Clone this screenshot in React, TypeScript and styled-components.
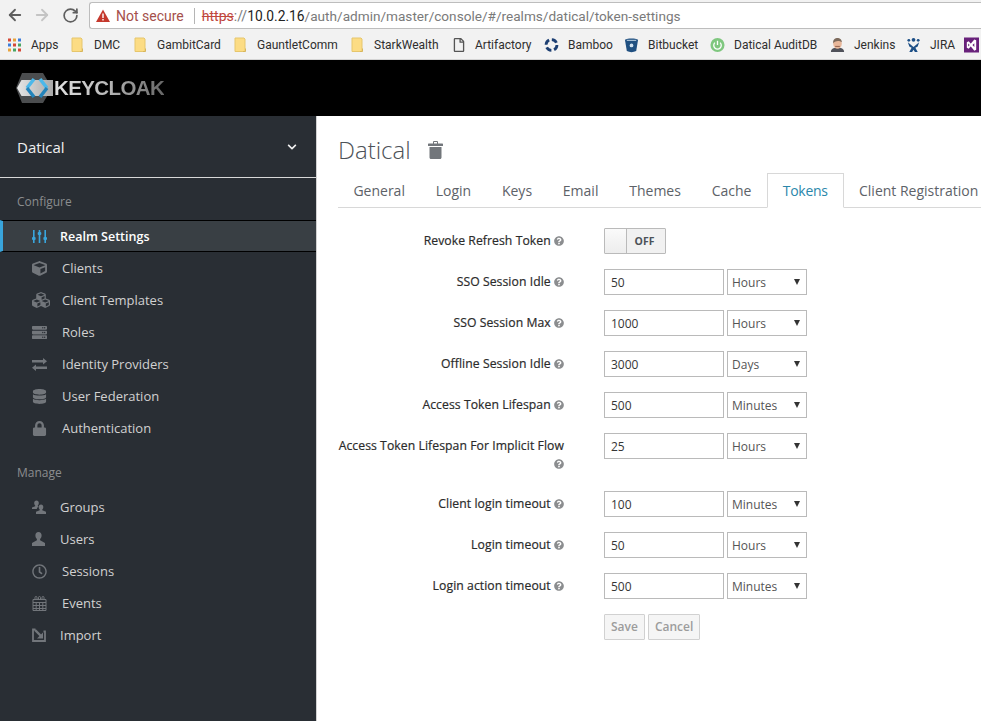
import React from 'react';
import styled, { createGlobalStyle } from 'styled-components';
import {
  FaCube,
  FaCubes,
  FaDatabase,
  FaLock,
  FaQuestionCircle,
  FaRegClock,
  FaRegFile,
  FaServer,
  FaChevronDown,
} from 'react-icons/fa';
import { ArrowLeft, ArrowRight, RotateCw } from 'lucide-react';

const GlobalStyle = createGlobalStyle`
  html, body {
    margin: 0;
    padding: 0;
    height: 100%;
    overflow: hidden;
    background: #fff;
  }
  * {
    box-sizing: border-box;
  }
`;

const Shell = styled.div`
  width: 981px;
  height: 721px;
  display: flex;
  flex-direction: column;
  overflow: hidden;
  font-family: 'Open Sans', sans-serif;
`;

const Toolbar = styled.div`
  height: 30px;
  flex: none;
  display: flex;
  align-items: center;
  background: #f2f2f2;
  padding-left: 6px;
`;

const NavButton = styled.span<{ $dim?: boolean; $gap: number }>`
  display: flex;
  width: 18px;
  margin-right: ${p => p.$gap}px;
  color: ${p => (p.$dim ? '#c4c4c4' : '#5e5e5e')};
`;

const Omnibox = styled.div`
  flex: 1;
  height: 27px;
  margin-top: 1px;
  display: flex;
  align-items: center;
  background: #fff;
  border: 1px solid #bdbdbd;
  border-right: 0;
  border-radius: 3px 0 0 3px;
  padding-left: 6px;
  font-family: Roboto, 'Liberation Sans', sans-serif;
  font-size: 14px;
  white-space: nowrap;
`;

const NotSecure = styled.span`
  color: #a5504b;
  margin-left: 6px;
  padding-right: 10px;
  margin-right: 7px;
  border-right: 1px solid #b5b5b5;
  line-height: 16px;
`;

const Scheme = styled.span`
  color: #c0473d;
  text-decoration: line-through;
`;

const UrlDim = styled.span<{ $path?: boolean }>`
  color: #7a7a7a;
  font-size: ${p => (p.$path ? '13.6px' : '14px')};
`;

const UrlHost = styled.span`
  color: #222;
  font-size: 13.8px;
`;

const BookmarkBar = styled.div`
  height: 30px;
  flex: none;
  display: flex;
  align-items: center;
  background: #f2f2f2;
  border-bottom: 1px solid #d4d4d4;
  padding-left: 7px;
  font-family: Roboto, 'Liberation Sans', sans-serif;
  font-size: 12px;
  color: #2e2e2e;
  white-space: nowrap;
`;

const Bookmark = styled.span<{ $w: number }>`
  flex: none;
  width: ${p => p.$w}px;
  display: flex;
  align-items: center;
  gap: 9px;
`;

const BookmarkIcon = styled.svg`
  flex: none;
  width: 15px;
  height: 16px;
`;

const Masthead = styled.header`
  height: 56px;
  flex: none;
  display: flex;
  align-items: center;
  background: #000;
  padding-left: 16px;
`;

const LogoText = styled.span`
  font-family: 'Liberation Sans', sans-serif;
  font-weight: 700;
  font-size: 20.5px;
  letter-spacing: -0.6px;
  margin-left: -1px;
  background: linear-gradient(90deg, #e0e0e0 0%, #bdbdbd 45%, #666 100%);
  -webkit-background-clip: text;
  background-clip: text;
  color: transparent;
`;

const Body = styled.div`
  flex: 1;
  display: flex;
  min-height: 0;
`;

const Sidebar = styled.aside`
  width: 317px;
  flex: none;
  background: #292e34;
  border-right: 1px solid #d1d1d1;
  color: #d1d1d1;
  font-size: 13px;
`;

const RealmSelect = styled.div`
  height: 62px;
  display: flex;
  align-items: center;
  justify-content: space-between;
  padding: 0 19px 0 17px;
  border-bottom: 1px solid #d8d8d8;
  color: #f0f0f0;
  font-size: 15px;
`;

const SectionTitle = styled.h2<{ $top: number; $bottom: number }>`
  margin: ${p => p.$top}px 0 ${p => p.$bottom}px;
  padding-left: 17px;
  font-size: 12px;
  line-height: 18px;
  font-weight: 400;
  color: #8b8d8f;
`;

const NavRow = styled.div<{ $active?: boolean }>`
  height: 32px;
  display: flex;
  align-items: center;
  padding-left: 32px;
  color: ${p => (p.$active ? '#fff' : '#d1d1d1')};
  ${p =>
    p.$active &&
    `
    background: #393f44;
    border-top: 1px solid #000;
    border-bottom: 1px solid #000;
    border-left: 3px solid #39a5dc;
    padding-left: 29px;
    font-weight: 600;
    font-size: 12.5px;
  `}
`;

const NavIcon = styled.span<{ $active?: boolean; $w: number }>`
  flex: none;
  width: ${p => p.$w}px;
  display: flex;
  align-items: center;
  color: ${p => (p.$active ? '#39a5dc' : '#72767b')};
  font-size: 15px;
`;

const Main = styled.main`
  flex: 1;
  min-width: 0;
  padding: 13px 0 0 21px;
  color: #363636;
  font-size: 12px;
`;

const TitleRow = styled.div`
  height: 40px;
  display: flex;
  align-items: center;
  gap: 17px;
`;

const Title = styled.h1`
  margin: 0;
  font-size: 24px;
  font-weight: 300;
  color: #4d5258;
`;

const TrashButton = styled.span`
  display: flex;
  margin-top: 2px;
  color: #72767b;
`;

const Tabs = styled.nav`
  display: flex;
  height: 35px;
  margin-top: 4px;
  border-bottom: 1px solid #d8d8d8;
  white-space: nowrap;
  font-size: 14px;
`;

const Tab = styled.span<{ $active?: boolean }>`
  flex: none;
  height: 35px;
  display: flex;
  align-items: center;
  padding: 0 15.4px;
  color: ${p => (p.$active ? '#2b87ab' : '#5d6268')};
  ${p =>
    p.$active &&
    `
    padding: 0 15px;
    letter-spacing: -0.3px;
    background: #fff;
    border: 1px solid #d8d8d8;
    border-bottom-color: #fff;
  `}
`;

const Form = styled.form`
  margin-top: 20px;
  display: flex;
  flex-direction: column;
  gap: 15px;
`;

const Row = styled.div`
  display: grid;
  grid-template-columns: 226px 267px;
  column-gap: 40px;
  align-items: start;
`;

const Label = styled.label<{ $tall?: boolean }>`
  display: block;
  text-align: right;
  font-size: 12.2px;
  letter-spacing: 0.07px;
  color: #2b2b2b;
  -webkit-text-stroke: 0.2px #2b2b2b;
  line-height: 18px;
  padding-top: 4px;
  min-height: ${p => (p.$tall ? '43px' : '26px')};
`;

const HelpIcon = styled(FaQuestionCircle)`
  color: #8b8d8f;
  font-size: 10px;
  vertical-align: -1px;
`;

const Controls = styled.div`
  display: flex;
  gap: 3px;
`;

const NumberInput = styled.input`
  width: 120px;
  height: 26px;
  padding: 2px 6px;
  border: 1px solid #bababa;
  font: inherit;
  color: #363636;
  background: #fff;
  outline: 0;
`;

const SelectWrap = styled.span`
  position: relative;
  width: 80px;
  height: 26px;
  display: block;

  &::after {
    content: '';
    position: absolute;
    right: 7px;
    top: 10px;
    border-left: 3.5px solid transparent;
    border-right: 3.5px solid transparent;
    border-top: 6px solid #333;
  }
`;

const UnitSelect = styled.select`
  width: 100%;
  height: 100%;
  appearance: none;
  padding: 0 4px;
  border: 1px solid #bababa;
  border-radius: 0;
  font: inherit;
  color: #555;
  background: #fff;
`;

const Switch = styled.div`
  width: 62px;
  height: 26px;
  display: flex;
  border: 1px solid #bababa;
  border-radius: 1px;
`;

const SwitchHandle = styled.span`
  width: 22px;
  background: linear-gradient(#fafafa, #ededed);
  border-right: 1px solid #bababa;
`;

const SwitchState = styled.span`
  flex: 1;
  display: flex;
  align-items: center;
  justify-content: center;
  padding-right: 3px;
  background: #f1f1f1;
  font-size: 10.5px;
  font-weight: 700;
  color: #4d5258;
`;

const ButtonRow = styled.div`
  display: flex;
  gap: 3px;
  grid-column: 2;
`;

const Button = styled.button`
  height: 26px;
  padding: 0 6px 2px;
  border: 1px solid #d1d1d1;
  border-radius: 1px;
  background: #f5f5f5;
  color: #9c9c9c;
  font: inherit;
  font-weight: 600;
`;

const TrashIcon = () => (
  <svg width="15" height="18" viewBox="0 0 15 18" fill="currentColor">
    <path d="M5 3V1.200C5 .5 5.500 0 6.200 0h2.600C9.500 0 10 .5 10 1.200V3H9V1H6v2z" />
    <rect x="0" y="2.500" width="15" height="2.500" rx="0.600" />
    <path d="M1.500 6h12v10.500c0 .9-.6 1.500-1.500 1.500H3c-.9 0-1.500-.6-1.500-1.500z" />
  </svg>
);

const SlidersIcon = () => (
  <svg width="15" height="15" viewBox="0 0 15 15" fill="currentColor">
    <rect x="1" y="1" width="1.6" height="13" />
    <rect x="6.700" y="1" width="1.6" height="13" />
    <rect x="12.400" y="1" width="1.6" height="13" />
    <rect x="0" y="8" width="3.6" height="3" rx="1" />
    <rect x="5.700" y="3" width="3.6" height="3" rx="1" />
    <rect x="11.400" y="8" width="3.6" height="3" rx="1" />
  </svg>
);

const ExchangeIcon = () => (
  <svg width="15" height="13" viewBox="0 0 15 13" fill="currentColor">
    <path d="M0 2h11V0l4 3.200-4 3.200V4.500H0z" />
    <path d="M15 8.500H4V6.600L0 9.800 4 13v-2h11z" />
  </svg>
);

const GroupsIcon = () => (
  <svg width="14" height="14" viewBox="0 0 14 14" fill="currentColor">
    <path d="M4.500 0.500c1.500 0 2.300 1.100 2.300 2.500 0 1-.4 1.900-1 2.400v.8l.9.4c-1 .5-1.700 1.300-1.900 2.400H0V7.600l3.200-1.400v-.8c-.6-.5-1-1.400-1-2.400C2.200 1.600 3 .5 4.500.5z" />
    <path d="M9 4.500c1.500 0 2.300 1.100 2.300 2.500 0 1-.4 1.900-1 2.400v.8L14 11.800V14H4v-2.200l3.700-1.600v-.8c-.6-.5-1-1.400-1-2.400C6.700 5.600 7.500 4.500 9 4.500z" />
  </svg>
);

const UserIcon = () => (
  <svg width="13" height="14" viewBox="0 0 13 14" fill="currentColor">
    <path d="M6.500 0C8.500 0 9.600 1.500 9.600 3.500c0 1.500-.6 2.800-1.500 3.500v1.300L13 11v3H0v-3l4.900-2.700V7C4 6.300 3.400 5 3.400 3.500 3.400 1.500 4.500 0 6.500 0z" />
  </svg>
);

const CalendarIcon = () => (
  <svg width="15" height="15" viewBox="0 0 15 15" fill="none" stroke="currentColor" strokeWidth="1">
    <path d="M1 3.500h13v11H1zM1 6.500h13M1 9.500h13M1 12.500h13M4.200 6.500v8M7.500 6.500v8M10.800 6.500v8" />
    <path d="M3 3.500V1.500a1 1 0 0 1 2 0v2M6.500 3.500V1.500a1 1 0 0 1 2 0v2M10 3.500V1.500a1 1 0 0 1 2 0v2" />
  </svg>
);

const ImportIcon = () => (
  <svg width="14" height="14" viewBox="0 0 14 14" fill="none" stroke="currentColor">
    <path d="M3.500 1.500H1v11.500h12V3.500H11.500" strokeWidth="1.800" />
    <path d="M3 2l6.500 6.500" strokeWidth="2.400" />
    <path d="M11 10.500V4.500L5 10.500z" fill="currentColor" stroke="none" />
  </svg>
);

const FolderIcon = () => (
  <BookmarkIcon viewBox="0 0 15 16">
    <path d="M2 1h9l1 1v12.500H2z" fill="#fcdc84" stroke="#e6c66c" />
    <path d="M10 14.500h2.500V11.500" fill="none" stroke="#d8b65c" />
  </BookmarkIcon>
);

const BambooIcon = () => (
  <BookmarkIcon viewBox="0 0 16 16">
    <circle cx="8" cy="8" r="5.800" fill="none" stroke="#1d3f72" strokeWidth="3" strokeDasharray="6 3" />
  </BookmarkIcon>
);

const BitbucketIcon = () => (
  <BookmarkIcon viewBox="0 0 16 16">
    <path d="M1 2.500C4 0.500 12 0.500 15 2.500L13 14.500C10 16 6 16 3 14.500z" fill="#205081" />
    <circle cx="8" cy="8.500" r="2" fill="#cfe0ee" />
    <path d="M3 3h10" stroke="#cfe0ee" strokeWidth="1" />
  </BookmarkIcon>
);

const AuditIcon = () => (
  <BookmarkIcon viewBox="0 0 16 16">
    <circle cx="8" cy="8" r="7.500" fill="#7fc77f" />
    <path d="M5.200 5.500a4 4 0 1 0 5.600 0" fill="none" stroke="#fff" strokeWidth="1.400" />
    <path d="M8 3.500v4.500" stroke="#fff" strokeWidth="1.400" />
  </BookmarkIcon>
);

const JenkinsIcon = () => (
  <BookmarkIcon viewBox="0 0 16 16">
    <path d="M1 15.500c0-3 2-4.500 7-4.500s7 1.500 7 4.500z" fill="#50525a" />
    <ellipse cx="8" cy="6.500" rx="4.600" ry="5.600" fill="#e8b79a" />
    <path d="M3.400 6C3 1.500 6 0.500 8 0.500s4.600 1 4.600 4.500C10 3 6 3 3.400 6z" fill="#7c6a5c" />
    <path d="M5.500 9.500h5" stroke="#8e5b46" strokeWidth="1" />
  </BookmarkIcon>
);

const JiraIcon = () => (
  <BookmarkIcon viewBox="0 0 16 16">
    <circle cx="8" cy="2.500" r="2" fill="#1d4f86" />
    <circle cx="3" cy="3" r="1.500" fill="#1d4f86" />
    <circle cx="13" cy="3" r="1.500" fill="#1d4f86" />
    <path d="M2 5l6 5 6-5-1.500 4.500L10 11l2.500 4.500h-3L8 13l-1.500 2.500h-3L6 11 3.500 9.500z" fill="#1d4f86" />
  </BookmarkIcon>
);

const VsIcon = () => (
  <BookmarkIcon viewBox="0 0 16 16">
    <rect width="16" height="16" fill="#68217a" />
    <path d="M3 5l2-1 3.500 4L5 12l-2-1zM13 3v10l-2 1-5-6 5-6z" fill="#fff" />
    <path d="M4.500 6.500v3L6 8zM11 6l-2 2 2 2z" fill="#68217a" />
  </BookmarkIcon>
);

const AppsIcon = () => {
  const colors = ['#d64937', '#e8a33d', '#3b7ddd', '#3b7ddd', '#d64937', '#4aa564', '#e8a33d', '#4aa564', '#d64937'];
  return (
    <BookmarkIcon viewBox="0 0 15 15">
      {colors.map((c, i) => (
        <rect key={i} x={1 + (i % 3) * 5} y={1 + Math.floor(i / 3) * 5} width="3" height="3" fill={c} />
      ))}
    </BookmarkIcon>
  );
};

const LogoMark = () => (
  <svg width="39" height="30" viewBox="0 0 39 30">
    <defs>
      <linearGradient id="logoBand" x1="0" x2="1" y1="0" y2="0">
        <stop offset="0" stopColor="#e6e6e6" />
        <stop offset="1" stopColor="#a9a9a9" />
      </linearGradient>
    </defs>
    <path d="M6 0H27L36 15 27 30H6L0 15z" fill="#4b4d4f" />
    <path d="M1 15L5.500 7H37V23H5.500z" fill="url(#logoBand)" />
    <path d="M18 6l-7 9" fill="none" stroke="#4cb8ea" strokeWidth="3.500" />
    <path d="M11 15l7 9" fill="none" stroke="#2384bb" strokeWidth="3.500" />
    <path d="M24 6l7 9" fill="none" stroke="#4cb8ea" strokeWidth="3.500" />
    <path d="M31 15l-7 9" fill="none" stroke="#2384bb" strokeWidth="3.500" />
  </svg>
);

const bookmarks: { label: string; w: number; icon: React.ReactNode }[] = [
  { label: 'DMC', w: 63, icon: <FolderIcon /> },
  { label: 'GambitCard', w: 100, icon: <FolderIcon /> },
  { label: 'GauntletComm', w: 117, icon: <FolderIcon /> },
  { label: 'StarkWealth', w: 102, icon: <FolderIcon /> },
  { label: 'Artifactory', w: 92, icon: <FaRegFile size={14} color="#555" /> },
  { label: 'Bamboo', w: 80, icon: <BambooIcon /> },
  { label: 'Bitbucket', w: 86, icon: <BitbucketIcon /> },
  { label: 'Datical AuditDB', w: 120, icon: <AuditIcon /> },
  { label: 'Jenkins', w: 76, icon: <JenkinsIcon /> },
  { label: 'JIRA', w: 58, icon: <JiraIcon /> },
];

const configureItems: { label: string; w: number; icon: React.ReactNode }[] = [
  { label: 'Clients', w: 30, icon: <FaCube /> },
  { label: 'Client Templates', w: 30, icon: <FaCubes size={18} /> },
  { label: 'Roles', w: 30, icon: <FaServer /> },
  { label: 'Identity Providers', w: 30, icon: <ExchangeIcon /> },
  { label: 'User Federation', w: 30, icon: <FaDatabase /> },
  { label: 'Authentication', w: 30, icon: <FaLock /> },
];

const manageItems: { label: string; w: number; icon: React.ReactNode }[] = [
  { label: 'Groups', w: 28, icon: <GroupsIcon /> },
  { label: 'Users', w: 28, icon: <UserIcon /> },
  { label: 'Sessions', w: 30, icon: <FaRegClock /> },
  { label: 'Events', w: 30, icon: <CalendarIcon /> },
  { label: 'Import', w: 28, icon: <ImportIcon /> },
];

const tabs = ['General', 'Login', 'Keys', 'Email', 'Themes', 'Cache', 'Tokens', 'Client Registration'];

const timeouts: { label: string; value: string; unit: string; tall?: boolean }[] = [
  { label: 'SSO Session Idle', value: '50', unit: 'Hours' },
  { label: 'SSO Session Max', value: '1000', unit: 'Hours' },
  { label: 'Offline Session Idle', value: '3000', unit: 'Days' },
  { label: 'Access Token Lifespan', value: '500', unit: 'Minutes' },
  { label: 'Access Token Lifespan For Implicit Flow', value: '25', unit: 'Hours', tall: true },
  { label: 'Client login timeout', value: '100', unit: 'Minutes' },
  { label: 'Login timeout', value: '50', unit: 'Hours' },
  { label: 'Login action timeout', value: '500', unit: 'Minutes' },
];

const App: React.FC = () => (
  <Shell>
    <GlobalStyle />
    <Toolbar>
      <NavButton $gap={9}><ArrowLeft size={18} strokeWidth={2.4} /></NavButton>
      <NavButton $dim $gap={11}><ArrowRight size={18} strokeWidth={2.4} /></NavButton>
      <NavButton $gap={9}><RotateCw size={17} strokeWidth={2.4} /></NavButton>
      <Omnibox>
        <svg width="14" height="13" viewBox="0 0 14 13">
          <path d="M7 0.500L14 13H0z" fill="#c5392d" />
          <rect x="6.300" y="4.500" width="1.400" height="4.500" fill="#fff" />
          <rect x="6.300" y="10" width="1.400" height="1.500" fill="#fff" />
        </svg>
        <NotSecure>Not secure</NotSecure>
        <Scheme>https</Scheme>
        <UrlDim>://</UrlDim>
        <UrlHost>10.0.2.16</UrlHost>
        <UrlDim $path>/auth/admin/master/console/#/realms/datical/token-settings</UrlDim>
      </Omnibox>
    </Toolbar>
    <BookmarkBar>
      <Bookmark $w={63}>
        <AppsIcon />
        Apps
      </Bookmark>
      {bookmarks.map(b => (
        <Bookmark key={b.label} $w={b.w}>
          {b.icon}
          {b.label}
        </Bookmark>
      ))}
      <VsIcon />
    </BookmarkBar>
    <Masthead>
      <LogoMark />
      <LogoText>KEYCLOAK</LogoText>
    </Masthead>
    <Body>
      <Sidebar>
        <RealmSelect>
          Datical
          <FaChevronDown size={10} />
        </RealmSelect>
        <SectionTitle $top={15} $bottom={9}>Configure</SectionTitle>
        <NavRow $active>
          <NavIcon $active $w={28}><SlidersIcon /></NavIcon>
          Realm Settings
        </NavRow>
        {configureItems.map(item => (
          <NavRow key={item.label}>
            <NavIcon $w={item.w}>{item.icon}</NavIcon>
            {item.label}
          </NavRow>
        ))}
        <SectionTitle $top={20} $bottom={9}>Manage</SectionTitle>
        {manageItems.map(item => (
          <NavRow key={item.label}>
            <NavIcon $w={item.w}>{item.icon}</NavIcon>
            {item.label}
          </NavRow>
        ))}
      </Sidebar>
      <Main>
        <TitleRow>
          <Title>Datical</Title>
          <TrashButton><TrashIcon /></TrashButton>
        </TitleRow>
        <Tabs>
          {tabs.map(t => (
            <Tab key={t} $active={t === 'Tokens'}>{t}</Tab>
          ))}
        </Tabs>
        <Form>
          <Row>
            <Label>Revoke Refresh Token <HelpIcon /></Label>
            <Switch>
              <SwitchHandle />
              <SwitchState>OFF</SwitchState>
            </Switch>
          </Row>
          {timeouts.map(t => (
            <Row key={t.label}>
              <Label $tall={t.tall}>{t.label} <HelpIcon /></Label>
              <Controls>
                <NumberInput readOnly value={t.value} />
                <SelectWrap>
                  <UnitSelect defaultValue={t.unit}>
                    <option>{t.unit}</option>
                  </UnitSelect>
                </SelectWrap>
              </Controls>
            </Row>
          ))}
          <Row>
            <ButtonRow>
              <Button type="button">Save</Button>
              <Button type="button">Cancel</Button>
            </ButtonRow>
          </Row>
        </Form>
      </Main>
    </Body>
  </Shell>
);

export default App;
